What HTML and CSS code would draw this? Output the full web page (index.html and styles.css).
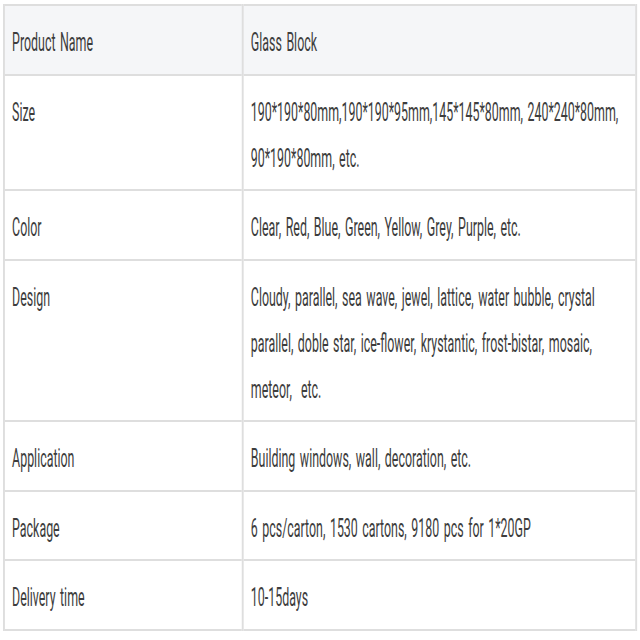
FILE: index.html
```html
<!DOCTYPE html>
<html>
<head>
<meta charset="utf-8">
<link rel="stylesheet" href="styles.css">
</head>
<body>
<div class="frame">
  <table class="spec">
    <colgroup><col class="c1"><col class="c2"></colgroup>
    <tr class="head"><td>Product Name</td><td>Glass Block</td></tr>
    <tr><td>Size</td><td>190*190*80mm,190*190*95mm,145*145*80mm, 240*240*80mm, 90*190*80mm, etc.</td></tr>
    <tr><td>Color</td><td>Clear, Red, Blue, Green, Yellow, Grey, Purple, etc.</td></tr>
    <tr><td>Design</td><td>Cloudy, parallel, sea wave, jewel, lattice, water bubble, crystal parallel, doble star, ice-flower, krystantic, frost-bistar, mosaic, meteor,&nbsp; etc.</td></tr>
    <tr><td>Application</td><td>Building windows, wall, decoration, etc.</td></tr>
    <tr><td>Package</td><td>6 pcs/carton, 1530 cartons, 9180 pcs for 1*20GP</td></tr>
    <tr><td>Delivery time</td><td>10-15days</td></tr>
  </table>
</div>
</body>
</html>
```
FILE: styles.css
```css
html, body {
  margin: 0;
  padding: 0;
  background: #ffffff;
}
.frame {
  width: 640px;
  height: 640px;
  overflow: hidden;
  padding: 4px 0 0 3px;
  box-sizing: border-box;
}
.spec {
  border-collapse: collapse;
  width: 1328px;
  transform: scaleX(0.4775);
  transform-origin: 0 0;
  font-family: Roboto, "Liberation Sans", sans-serif;
  font-size: 26px;
  line-height: 46px;
  word-spacing: 3px;
  color: #3d3d3d;
}
.c1 { width: 500px; }
.spec td {
  border-top: 2px solid #dedede;
  border-bottom: 2px solid #dedede;
  border-left: 4px solid #dedede;
  border-right: 4px solid #dedede;
  padding: 13px 16px 8.5px 15px;
  vertical-align: top;
}
.head td {
  background: #f5f6f8;
}
```
